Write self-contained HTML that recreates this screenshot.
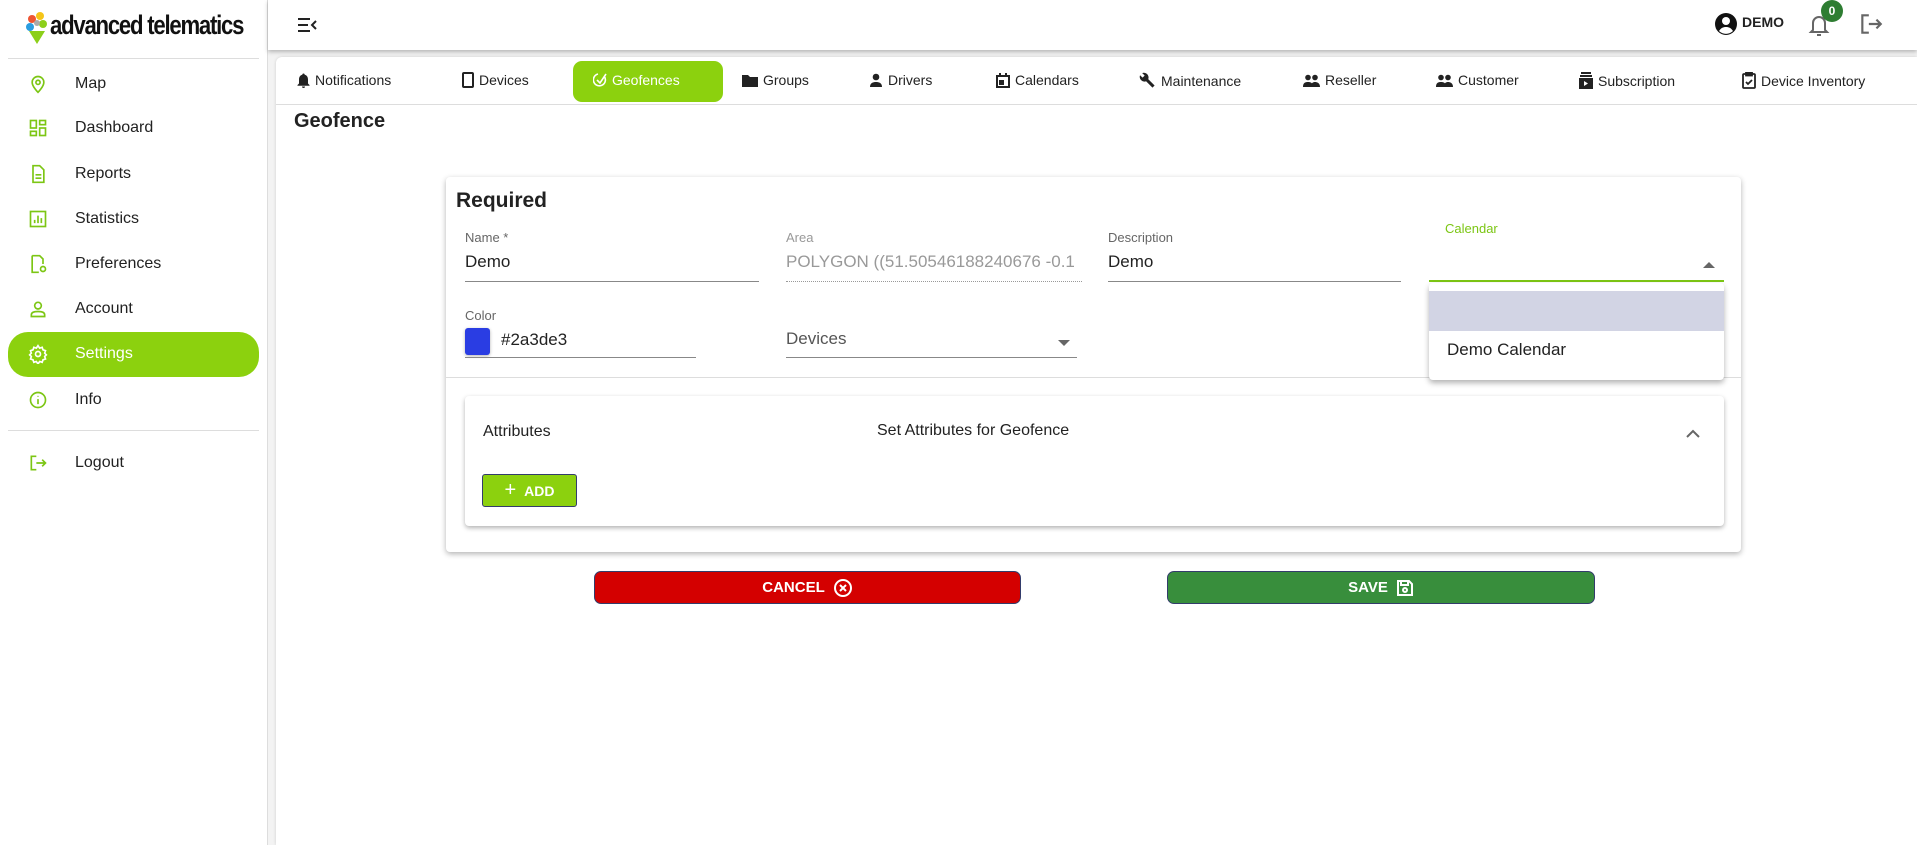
<!DOCTYPE html>
<html><head><meta charset="utf-8"><style>
*{box-sizing:border-box;margin:0;padding:0}
html,body{width:1917px;height:845px;overflow:hidden}
body{background:#f3f3f3;font-family:"Liberation Sans",sans-serif;color:#222;position:relative}
.abs{position:absolute}
#side{left:0;top:0;width:268px;height:845px;background:#fff;border-right:1px solid #ddd}
.item{position:absolute;left:0;width:268px;height:40px;font-size:16px;color:#222}
.item svg{position:absolute;left:28px;top:10px}
.item span{position:absolute;left:75px;top:11px}
#top{left:268px;top:0;width:1649px;height:50px;background:#fff;box-shadow:0 2px 4px rgba(0,0,0,.25)}
#panel{left:276px;top:57px;width:1641px;height:788px;background:#fff;border-radius:6px 0 0 0;box-shadow:0 0 3px rgba(0,0,0,.15)}
.tab{position:absolute;top:72px;font-size:14px;color:#222;display:flex;align-items:center;gap:5px}
.lbl{position:absolute;font-size:13px;color:#666}
.val{position:absolute;font-size:17px;color:#222}
.ul{position:absolute;height:1px;background:#888}
.btn{position:absolute;color:#fff;font-weight:bold;font-size:15px;display:flex;align-items:center;justify-content:center;gap:8px;border-radius:7px;border:1px solid #333c6b}
</style></head><body>
<div id="side" class="abs">
 <div class="abs" style="left:26px;top:11px;width:22px;height:34px">
  <svg width="22" height="34" viewBox="0 0 22 34"><path d="M11 33 L3 20 L19 20Z" fill="#8ccf1a"/><circle cx="6" cy="8" r="4" fill="#e53"/><circle cx="14" cy="5" r="4" fill="#f5c518"/><circle cx="4" cy="16" r="4" fill="#2a9de0"/><circle cx="17" cy="13" r="4" fill="#8ccf1a"/><circle cx="11" cy="12" r="3" fill="#aaa"/></svg>
 </div>
 <div class="abs" style="left:50px;top:10px;font-size:27px;font-weight:bold;letter-spacing:-1.5px;transform:scaleX(.82);transform-origin:left;color:#111;white-space:nowrap">advanced telematics</div>
 <div class="abs" style="left:8px;top:58px;width:251px;height:1px;background:#ddd"></div>
 <div class="item" style="top:64px"><svg width="20" height="20" viewBox="0 0 24 24" fill="none" stroke="#7cc614" stroke-width="2"><path d="M12 22s7-7 7-12a7 7 0 0 0-14 0c0 5 7 12 7 12z"/><circle cx="12" cy="10" r="2.5"/></svg><span>Map</span></div>
 <div class="item" style="top:108px"><svg width="20" height="20" viewBox="0 0 24 24" fill="none" stroke="#7cc614" stroke-width="2"><rect x="3" y="3" width="7" height="9"/><rect x="14" y="3" width="7" height="5"/><rect x="14" y="12" width="7" height="9"/><rect x="3" y="16" width="7" height="5"/></svg><span>Dashboard</span></div>
 <div class="item" style="top:154px"><svg width="20" height="20" viewBox="0 0 24 24" fill="none" stroke="#7cc614" stroke-width="2"><path d="M6 2h8l5 5v15H6z"/><path d="M9 13h7M9 17h7"/></svg><span>Reports</span></div>
 <div class="item" style="top:199px"><svg width="20" height="20" viewBox="0 0 24 24" fill="none" stroke="#7cc614" stroke-width="2"><rect x="3" y="3" width="18" height="18"/><path d="M8 17v-4M12 17V8M16 17v-6"/></svg><span>Statistics</span></div>
 <div class="item" style="top:244px"><svg width="20" height="20" viewBox="0 0 24 24" fill="none" stroke="#7cc614" stroke-width="2"><path d="M5 2h9l4 4v6M5 2v20h8"/><circle cx="18" cy="18" r="3"/></svg><span>Preferences</span></div>
 <div class="item" style="top:289px"><svg width="20" height="20" viewBox="0 0 24 24" fill="none" stroke="#7cc614" stroke-width="2"><circle cx="12" cy="8" r="4"/><path d="M4 21v-2c0-3 4-4 8-4s8 1 8 4v2z"/></svg><span>Account</span></div>
 <div class="abs" style="left:8px;top:332px;width:251px;height:45px;background:#8cd10e;border-radius:20px"></div>
 <div class="item" style="top:334px;color:#fff"><svg width="20" height="20" viewBox="0 0 24 24" fill="none" stroke="#fff" stroke-width="2"><circle cx="12" cy="12" r="3"/><path d="M12 2l2 3 3-1 1 3 3 1-1 3 2 2-2 2 1 3-3 1-1 3-3-1-2 3-2-3-3 1-1-3-3-1 1-3-2-2 2-2-1-3 3-1 1-3 3 1z"/></svg><span>Settings</span></div>
 <div class="item" style="top:380px"><svg width="20" height="20" viewBox="0 0 24 24" fill="none" stroke="#7cc614" stroke-width="2"><circle cx="12" cy="12" r="9"/><path d="M12 11v6M12 7v1"/></svg><span>Info</span></div>
 <div class="abs" style="left:8px;top:430px;width:251px;height:1px;background:#ddd"></div>
 <div class="item" style="top:443px"><svg width="20" height="20" viewBox="0 0 24 24" fill="none" stroke="#7cc614" stroke-width="2"><path d="M10 4H4v16h6M10 12h11M17 8l4 4-4 4"/></svg><span>Logout</span></div>
</div>
<div id="top" class="abs">
 <svg class="abs" style="left:27px;top:13px" width="24" height="24" viewBox="0 0 24 24" fill="none" stroke="#222" stroke-width="2"><path d="M3 6h12M3 12h10M3 18h12M21 8l-4 4 4 4"/></svg>
 <svg class="abs" style="left:1446px;top:12px" width="24" height="24" viewBox="0 0 24 24"><circle cx="12" cy="12" r="11" fill="#111"/><circle cx="12" cy="9" r="4" fill="#fff"/><path d="M5 19c2-3 4-4 7-4s5 1 7 4a10 10 0 0 1-14 0z" fill="#fff"/></svg>
 <div class="abs" style="left:1474px;top:14px;font-size:14px;font-weight:bold">DEMO</div>
 <svg class="abs" style="left:1539px;top:12px" width="24" height="26" viewBox="0 0 24 26" fill="none" stroke="#666" stroke-width="2"><path d="M6 18V11a6 6 0 0 1 12 0v7l2 2H4z"/><path d="M10 23h4"/></svg>
 <div class="abs" style="left:1553px;top:0;width:22px;height:22px;border-radius:11px;background:#2e7d32;color:#fff;font-size:12px;font-weight:bold;text-align:center;line-height:22px">0</div>
 <svg class="abs" style="left:1590px;top:11px" width="26" height="26" viewBox="0 0 24 24" fill="none" stroke="#666" stroke-width="2"><path d="M10 4H4v16h6M10 12h11M17 8l4 4-4 4"/></svg>
</div>
<div id="panel" class="abs"></div>
<div class="abs" style="left:573px;top:61px;width:150px;height:41px;background:#8cd10e;border-radius:9px"></div>
<div class="abs" style="left:276px;top:104px;width:1641px;height:1px;background:#ddd"></div>
<div class="tab" style="left:297px"><svg width="13" height="15" viewBox="0 0 13 15"><path d="M6.5 0.5c.8 0 1.2.5 1.2 1.2C10 2.3 11 4 11 6.5v4l1.5 1.5v.8H.5V12L2 10.5v-4C2 4 3 2.3 5.3 1.7c0-.7.4-1.2 1.2-1.2z" fill="#222"/><path d="M5 13.5h3a1.5 1.5 0 0 1-3 0z" fill="#222"/></svg>Notifications</div>
<div class="tab" style="left:462px"><svg width="12" height="16" viewBox="0 0 12 16" fill="none" stroke="#222" stroke-width="2"><rect x="1" y="1" width="10" height="14" rx="1"/></svg>Devices</div>
<div class="tab" style="left:593px;color:#fff"><svg width="14" height="16" viewBox="0 0 14 16" fill="none" stroke="#fff" stroke-width="1.6"><path d="M5 2a6 6 0 1 0 6 2M4 8l3 3 6-9"/></svg>Geofences</div>
<div class="tab" style="left:742px"><svg width="16" height="13" viewBox="0 0 16 13"><path d="M0 1h6l2 2h8v10H0z" fill="#222"/></svg>Groups</div>
<div class="tab" style="left:869px"><svg width="14" height="14" viewBox="0 0 14 14"><circle cx="7" cy="4" r="3.3" fill="#222"/><path d="M1 14c0-4 3-5 6-5s6 1 6 5z" fill="#222"/></svg>Drivers</div>
<div class="tab" style="left:996px"><svg width="14" height="15" viewBox="0 0 14 15" fill="none" stroke="#222" stroke-width="2"><rect x="1" y="3" width="12" height="11"/><path d="M4 0v3M10 0v3"/><rect x="4" y="8" width="3" height="3" fill="#222"/></svg>Calendars</div>
<div class="tab" style="left:1139px"><svg width="17" height="17" viewBox="0 0 24 24"><path d="M22 19l-9-9c1-2 .5-5-1.5-7-2-2-5-2.5-7-1.5L8 5 5 8 1.5 4.5C.5 6.5 1 9.5 3 11.5c2 2 5 2.5 7 1.5l9 9z" fill="#222"/></svg>Maintenance</div>
<div class="tab" style="left:1303px"><svg width="17" height="13" viewBox="0 0 17 13"><circle cx="5" cy="3.5" r="2.8" fill="#222"/><circle cx="12" cy="3.5" r="2.8" fill="#222"/><path d="M0 13c0-4 2-5 5-5s5 1 5 5zM8 13c0-4 2-5 4-5s5 1 5 5z" fill="#222"/></svg>Reseller</div>
<div class="tab" style="left:1436px"><svg width="17" height="13" viewBox="0 0 17 13"><circle cx="5" cy="3.5" r="2.8" fill="#222"/><circle cx="12" cy="3.5" r="2.8" fill="#222"/><path d="M0 13c0-4 2-5 5-5s5 1 5 5zM8 13c0-4 2-5 4-5s5 1 5 5z" fill="#222"/></svg>Customer</div>
<div class="tab" style="left:1579px"><svg width="14" height="17" viewBox="0 0 14 17"><rect x="2" y="0" width="10" height="2" fill="#222"/><rect x="1" y="3" width="12" height="2" fill="#222"/><rect x="0" y="6" width="14" height="11" fill="#222"/><path d="M5 9l4 2.5L5 14z" fill="#fff"/></svg>Subscription</div>
<div class="tab" style="left:1742px"><svg width="14" height="17" viewBox="0 0 14 17" fill="none" stroke="#222" stroke-width="1.8"><rect x="1" y="2" width="12" height="14" rx="1"/><rect x="4" y="0.5" width="6" height="3" fill="#222"/><path d="M4 10l2 2 4-4"/></svg>Device Inventory</div>
<div class="abs" style="left:294px;top:110px;font-size:20px;font-weight:bold;color:#222">Geofence</div>

<div class="abs" style="left:446px;top:177px;width:1295px;height:375px;background:#fff;border-radius:4px;box-shadow:0 2px 6px rgba(0,0,0,.3)"></div>
<div class="abs" style="left:456px;top:189px;font-size:21px;font-weight:bold;color:#222">Required</div>
<div class="lbl" style="left:465px;top:230px">Name *</div>
<div class="val" style="left:465px;top:252px">Demo</div>
<div class="ul" style="left:465px;top:281px;width:294px"></div>
<div class="lbl" style="left:786px;top:230px;color:#999">Area</div>
<div class="val" style="left:786px;top:252px;color:#999;width:296px;overflow:hidden;white-space:nowrap">POLYGON ((51.50546188240676 -0.1</div>
<div class="ul" style="left:786px;top:281px;width:296px;background:none;border-top:1px dotted #999"></div>
<div class="lbl" style="left:1108px;top:230px">Description</div>
<div class="val" style="left:1108px;top:252px">Demo</div>
<div class="ul" style="left:1108px;top:281px;width:293px"></div>
<div class="lbl" style="left:1445px;top:221px;color:#7cc614">Calendar</div>
<svg class="abs" style="left:1703px;top:261px" width="12" height="7"><path d="M0 7L6 1 12 7z" fill="#666"/></svg>
<div class="ul" style="left:1429px;top:280px;width:295px;height:2px;background:#7cc614"></div>
<div class="lbl" style="left:465px;top:308px">Color</div>
<div class="abs" style="left:465px;top:328px;width:25px;height:27px;background:#2a3de3;border-radius:3px;box-shadow:0 1px 3px rgba(0,0,0,.3)"></div>
<div class="val" style="left:501px;top:330px">#2a3de3</div>
<div class="ul" style="left:465px;top:357px;width:231px"></div>
<div class="val" style="left:786px;top:329px;color:#555">Devices</div>
<svg class="abs" style="left:1058px;top:340px" width="12" height="7"><path d="M0 0L6 6 12 0z" fill="#666"/></svg>
<div class="ul" style="left:786px;top:357px;width:291px"></div>
<div class="abs" style="left:446px;top:377px;width:1295px;height:1px;background:#ddd"></div>

<div class="abs" style="left:1429px;top:283px;width:295px;height:97px;background:#fff;border-radius:4px;box-shadow:0 3px 6px rgba(0,0,0,.3)"></div>
<div class="abs" style="left:1429px;top:291px;width:295px;height:40px;background:#d2d4e4"></div>
<div class="val" style="left:1447px;top:340px">Demo Calendar</div>

<div class="abs" style="left:465px;top:396px;width:1259px;height:130px;background:#fff;border-radius:4px;box-shadow:0 2px 5px rgba(0,0,0,.3)"></div>
<div class="val" style="left:483px;top:423px;font-size:16px">Attributes</div>
<div class="val" style="left:877px;top:422px;font-size:16px">Set Attributes for Geofence</div>
<svg class="abs" style="left:1686px;top:429px" width="14" height="9" fill="none" stroke="#666" stroke-width="2"><path d="M1 8l6-6 6 6"/></svg>
<div class="btn" style="left:482px;top:474px;width:95px;height:33px;background:#8cd10e;border-radius:3px;font-size:14px"><span style="font-size:20px;font-weight:normal">+</span>ADD</div>

<div class="btn" style="left:594px;top:571px;width:427px;height:33px;background:#d40000">CANCEL <svg width="20" height="20" viewBox="0 0 20 20" fill="none" stroke="#fff" stroke-width="2"><circle cx="10" cy="10" r="8"/><path d="M7 7l6 6M13 7l-6 6"/></svg></div>
<div class="btn" style="left:1167px;top:571px;width:428px;height:33px;background:#388e3c">SAVE <svg width="18" height="18" viewBox="0 0 18 18" fill="none" stroke="#fff" stroke-width="2"><path d="M2 2h11l3 3v11H2z"/><rect x="5" y="2" width="7" height="4"/><circle cx="9" cy="11" r="2"/></svg></div>
</body></html>
